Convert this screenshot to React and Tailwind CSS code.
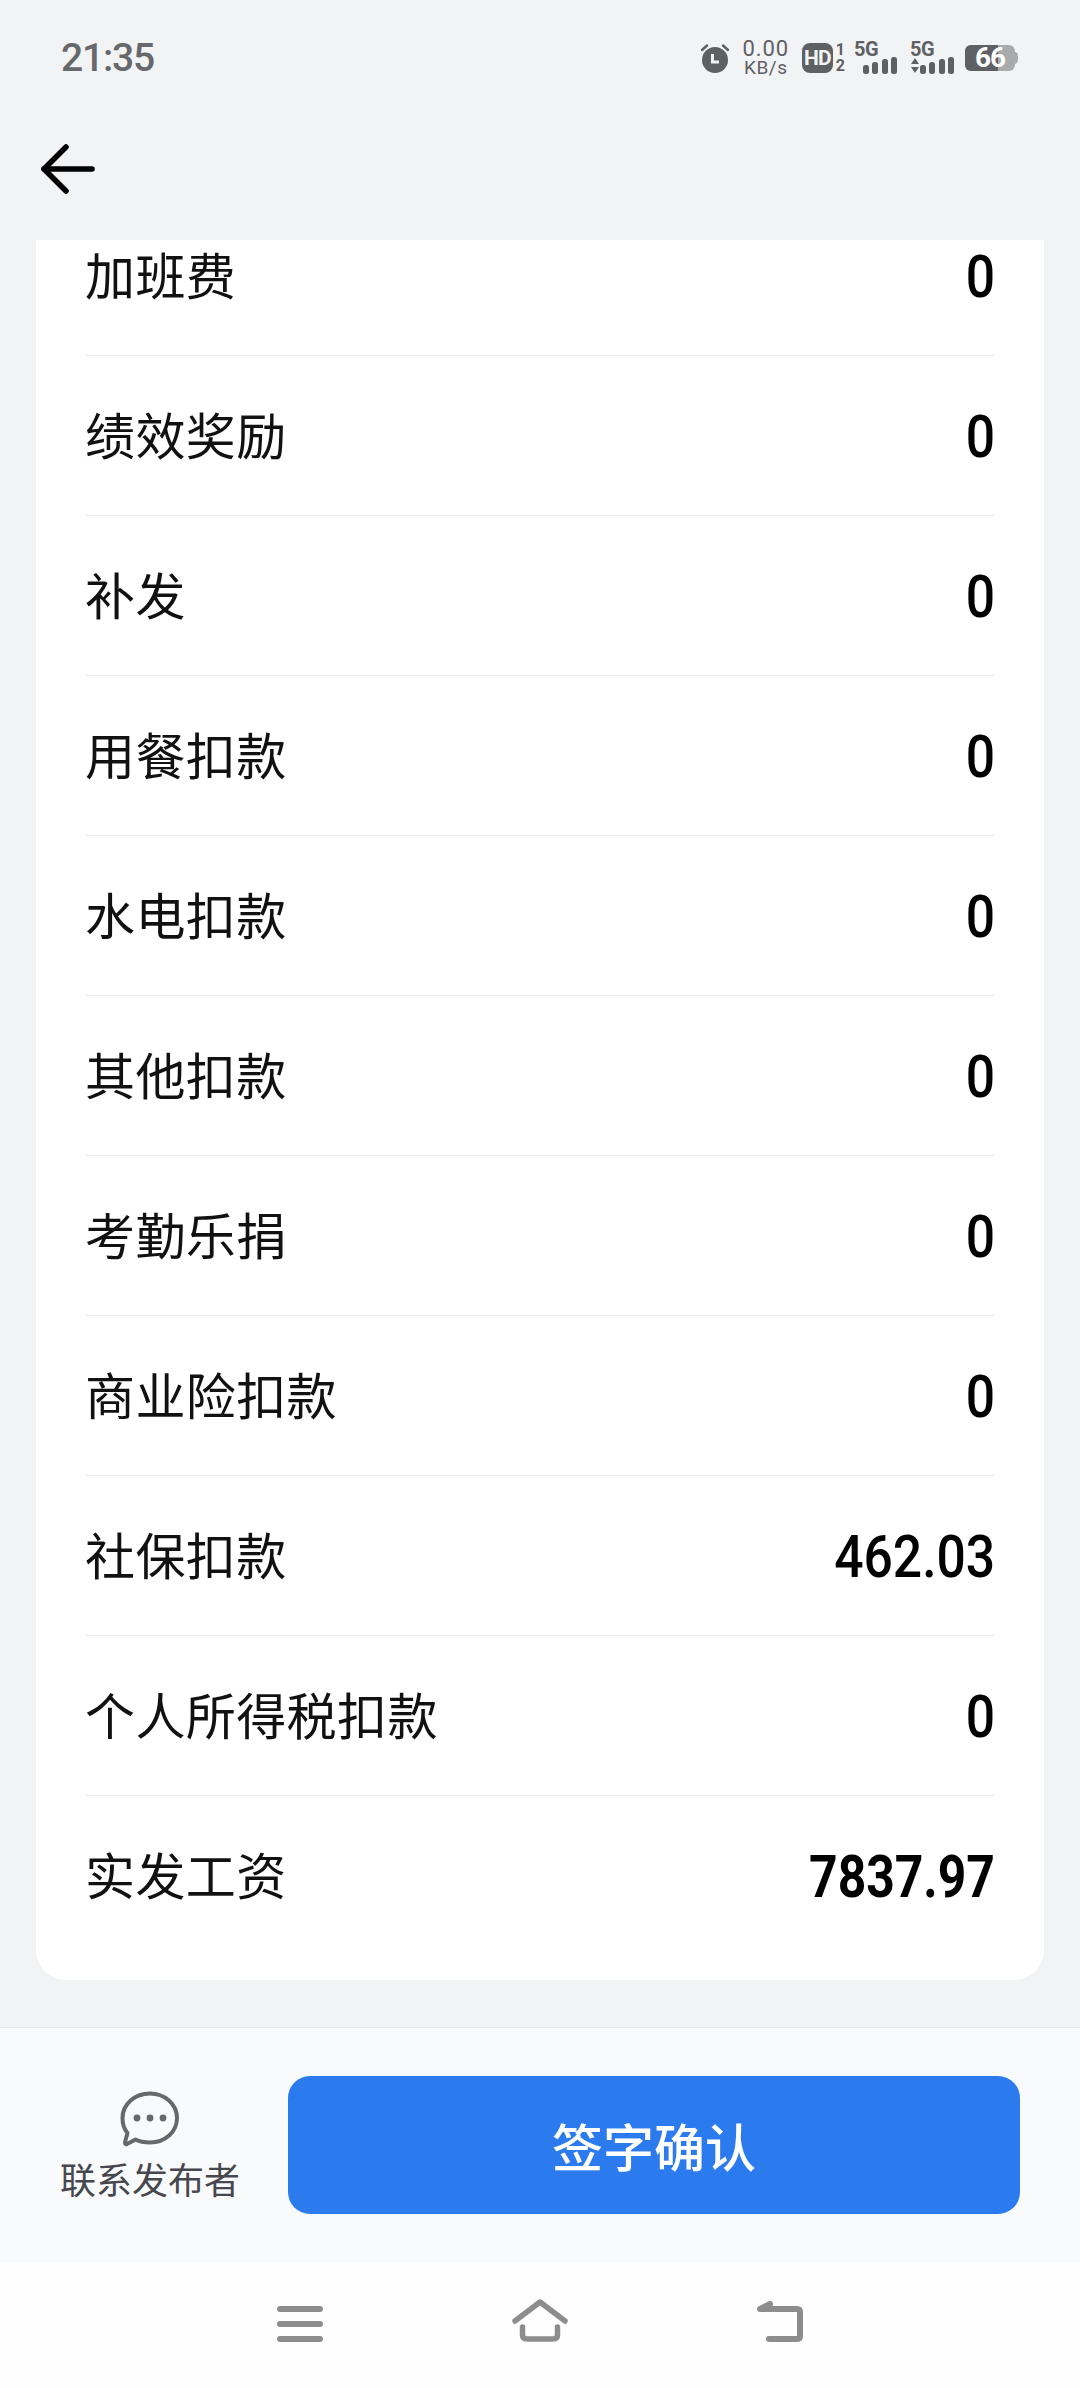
import React from "react";

const rows = [
  { label: "加班费", value: "0" },
  { label: "绩效奖励", value: "0" },
  { label: "补发", value: "0" },
  { label: "用餐扣款", value: "0" },
  { label: "水电扣款", value: "0" },
  { label: "其他扣款", value: "0" },
  { label: "考勤乐捐", value: "0" },
  { label: "商业险扣款", value: "0" },
  { label: "社保扣款", value: "462.03" },
  { label: "个人所得税扣款", value: "0" },
  { label: "实发工资", value: "7837.97", strong: true },
];

const SignalBars = () => (
  <svg width="34" height="17" viewBox="0 0 34 17" fill="#5f6063">
    <rect x="0" y="8" width="6" height="9" rx="2.5" />
    <rect x="9" y="5" width="6" height="12" rx="2.5" />
    <rect x="19" y="2" width="6" height="15" rx="2.5" />
    <rect x="28" y="0" width="6" height="17" rx="2.5" />
  </svg>
);

const StatusBar = () => (
  <div className="h-[100px] pt-4 pl-[61px] pr-[62px] flex items-center justify-between text-[#5f6063] font-['Roboto',sans-serif]">
    <span className="text-[39px] font-medium leading-none tracking-[-1.2px] text-[#66686b]">21:35</span>
    <div className="flex items-center">
      <svg width="28" height="29" viewBox="0 0 28 29" fill="#5f6063">
        <circle cx="14" cy="16" r="13" />
        <path d="M1 6 L6 1.5 M27 6 L22 1.5" stroke="#5f6063" strokeWidth="2.5" strokeLinecap="round" />
        <path d="M11.5 10 V18 H18" stroke="#f2f3f5" strokeWidth="3" fill="none" />
      </svg>
      <div className="ml-[11px] w-[52px] flex flex-col items-center">
        <span className="text-[22px] tracking-[0.9px] leading-[19px]">0.00</span>
        <span className="text-[19px] leading-[19px] tracking-[0.6px]">KB/s</span>
      </div>
      <div className="ml-[10px] w-[31px] h-[30px] rounded-lg bg-[#5f6063] flex items-center justify-center text-[#f2f3f5] text-[21px] font-bold leading-none tracking-[-1px]">
        HD
      </div>
      <div className="ml-[3px] flex flex-col items-center text-[16px] font-bold leading-[16px]">
        <span>1</span>
        <span>2</span>
      </div>
      <div className="ml-[9px] flex flex-col items-start w-[43px]">
        <span className="text-[20px] font-bold leading-[14px] tracking-[-0.5px]">5G</span>
        <div className="ml-[9px] mt-[1px]">
          <SignalBars />
        </div>
      </div>
      <div className="ml-[13px] flex flex-col items-start w-[44px]">
        <span className="text-[20px] font-bold leading-[14px] tracking-[-0.5px]">5G</span>
        <div className="mt-[1px] flex items-end">
          <svg width="10" height="17" viewBox="0 0 10 17" fill="#5f6063">
            <path d="M5 1 L9 7 H1 Z M1 10 H9 L5 16 Z" />
          </svg>
          <SignalBars />
        </div>
      </div>
      <div className="ml-[11px] relative w-[53px] h-[26px]">
        <div className="absolute right-0 top-[7px] w-[4px] h-[12px] rounded-r bg-[#a9aaac]" />
        <div className="absolute left-0 top-0 w-[50px] h-[26px] rounded-md bg-[#a9aaac]" />
        <div className="absolute left-0 top-0 w-[33px] h-[26px] rounded-l-md bg-[#5f6063]" />
        <div className="absolute left-[10px] top-0 h-[26px] flex items-center text-white text-[28px] font-bold leading-none tracking-[-1px]">66</div>
      </div>
    </div>
  </div>
);

const PayRow = ({ label, value, strong, last }) => (
  <div className={`h-[160px] flex items-center justify-between ${last ? "" : "border-b border-[#ececec]"}`}>
    <span className="pb-[6px] text-[50px] leading-none text-[#111] font-['Noto_Sans_CJK_SC',sans-serif] tracking-[0.4px]">{label}</span>
    <span
      className={`pt-[2px] text-[60px] leading-none text-black font-['Roboto',sans-serif] origin-right ${
        strong ? "font-bold scale-x-[0.83]" : "font-medium scale-x-[0.86]"
      }`}
    >
      {value}
    </span>
  </div>
);

export default function App() {
  return (
    <div className="w-[1080px] h-[2388px] flex flex-col overflow-hidden bg-[#f2f3f5]">
      <StatusBar />

      <div className="h-[140px] pl-[41px] pt-[44px]">
        <svg width="54" height="50" viewBox="0 0 54 50" fill="none" stroke="black" strokeWidth="5.5" strokeLinecap="round" strokeLinejoin="round">
          <path d="M25 3 L3 25 L25 47" />
          <path d="M3 25 H51" />
        </svg>
      </div>

      <div className="flex-1 min-h-0 overflow-hidden px-9">
        {/* list is scrolled, first row sits partly under the header */}
        <div className="-mt-[44px] bg-white rounded-[30px] px-[49px] pb-6">
          {rows.map((row, i) => (
            <PayRow key={row.label} {...row} last={i === rows.length - 1} />
          ))}
        </div>
      </div>

      <div className="h-[235px] border-t border-[#e6e7e9] bg-[#f9fafc] flex items-start pt-[48px] pl-[60px] pr-[60px]">
        <div className="w-[180px] flex flex-col items-center">
          <svg width="60" height="56" viewBox="0 0 60 56" fill="none" className="mt-[15px]">
            <path
              d="M30 2.5 C44.5 2.5 57 13 57 27 C57 41 45 51.5 30 51.5 C24 51.5 19.5 50.5 15.5 48.5 L7 53 C5.5 53.5 4.5 52.5 5 51 L7.5 42 C4 38 2.5 33 2.5 27 C2.5 13 15 2.5 30 2.5 Z"
              stroke="#66686c"
              strokeWidth="4"
              strokeLinejoin="round"
            />
            <circle cx="17" cy="27" r="3.4" fill="#66686c" />
            <circle cx="30" cy="27" r="3.4" fill="#66686c" />
            <circle cx="43" cy="27" r="3.4" fill="#66686c" />
          </svg>
          <span className="mt-[9px] text-[36px] leading-[44px] text-[#46484e] font-['Noto_Sans_CJK_SC',sans-serif] whitespace-nowrap">
            联系发布者
          </span>
        </div>
        <button className="ml-[48px] w-[732px] h-[138px] rounded-[22px] bg-[#2b7bef] text-white text-[51px] font-medium font-['Noto_Sans_CJK_SC',sans-serif]">
          签字确认
        </button>
      </div>

      <div className="h-[126px] bg-[#fefefe] flex justify-center gap-[180px] pt-[37px]">
        <svg width="60" height="48" viewBox="0 0 60 48" fill="none" stroke="#8d8d8d" strokeWidth="6" strokeLinecap="round">
          <path d="M10 10 H50 M10 25 H50 M10 40 H50" />
        </svg>
        <svg width="60" height="48" viewBox="0 0 60 48" fill="none" stroke="#8d8d8d" strokeWidth="5.5" strokeLinecap="round" strokeLinejoin="round">
          <path d="M5 22 L30 3 L55 22" />
          <path d="M12.5 28 V36 Q12.5 40 17 40 H43 Q47.5 40 47.5 36 V28" />
        </svg>
        <svg width="60" height="48" viewBox="0 0 60 48" fill="none" stroke="#8d8d8d" strokeWidth="6" strokeLinecap="round" strokeLinejoin="round">
          <path d="M19 40 H47 Q50 40 50 37 V13 Q50 10 47 10 H10 L20 5" />
        </svg>
      </div>
    </div>
  );
}
